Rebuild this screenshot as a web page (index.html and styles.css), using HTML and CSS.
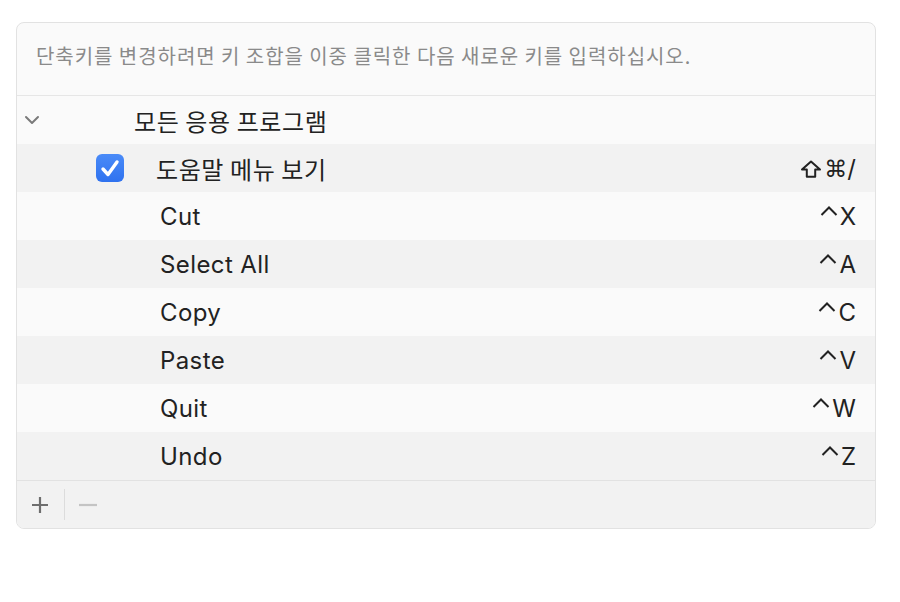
FILE: index.html
```html
<!doctype html>
<html>
  <head>
    <meta charset="utf-8">
    <link rel="stylesheet" href="styles.css">
  </head>
  <body>
    <div class="panel">
      <div class="hint">단축키를 변경하려면 키 조합을 이중 클릭한 다음 새로운 키를 입력하십시오.</div>
      <div class="rows">
        <div class="row group">
          <span class="chevron">
            <svg width="16" height="10" viewBox="0 0 16 10"><path d="M2 2 L8 8 L14 2" fill="none" stroke="#7a7a7a" stroke-width="2" stroke-linecap="round" stroke-linejoin="round"/></svg>
          </span>
          <span class="label">모든 응용 프로그램</span>
        </div>
        <div class="row item checked">
          <span class="check">
            <svg width="22" height="20" viewBox="0 0 22 20"><path d="M4 11 L9 16.5 L18 4" fill="none" stroke="#fff" stroke-width="3.4" stroke-linecap="round" stroke-linejoin="round"/></svg>
          </span>
          <span class="label">도움말 메뉴 보기</span>
          <span class="keys"><svg class="shift" width="22" height="18" viewBox="0 0 22 18"><path d="M11 1.5 L20 9.5 H15.2 V16.8 H6.8 V9.5 H2 Z" fill="none" stroke="#222" stroke-width="2" stroke-linejoin="round"/></svg><span class="cmdkey">⌘</span>/</span>
        </div>
        <div class="row cmd"><span class="label">Cut</span><span class="keys"><svg class="ctrl" width="18" height="10" viewBox="0 0 18 10"><path d="M1.5 9 L9 1.5 L16.5 9" fill="none" stroke="#222" stroke-width="2"/></svg>X</span></div>
        <div class="row cmd"><span class="label">Select All</span><span class="keys"><svg class="ctrl" width="18" height="10" viewBox="0 0 18 10"><path d="M1.5 9 L9 1.5 L16.5 9" fill="none" stroke="#222" stroke-width="2"/></svg>A</span></div>
        <div class="row cmd"><span class="label">Copy</span><span class="keys"><svg class="ctrl" width="18" height="10" viewBox="0 0 18 10"><path d="M1.5 9 L9 1.5 L16.5 9" fill="none" stroke="#222" stroke-width="2"/></svg>C</span></div>
        <div class="row cmd"><span class="label">Paste</span><span class="keys"><svg class="ctrl" width="18" height="10" viewBox="0 0 18 10"><path d="M1.5 9 L9 1.5 L16.5 9" fill="none" stroke="#222" stroke-width="2"/></svg>V</span></div>
        <div class="row cmd"><span class="label">Quit</span><span class="keys"><svg class="ctrl" width="18" height="10" viewBox="0 0 18 10"><path d="M1.5 9 L9 1.5 L16.5 9" fill="none" stroke="#222" stroke-width="2"/></svg>W</span></div>
        <div class="row cmd"><span class="label">Undo</span><span class="keys"><svg class="ctrl" width="18" height="10" viewBox="0 0 18 10"><path d="M1.5 9 L9 1.5 L16.5 9" fill="none" stroke="#222" stroke-width="2"/></svg>Z</span></div>
      </div>
      <div class="footer">
        <span class="btn add">
          <svg width="18" height="18" viewBox="0 0 18 18"><path d="M9 1 V17 M1 9 H17" stroke="#6e6e6e" stroke-width="2.2"/></svg>
        </span>
        <span class="divider"></span>
        <span class="btn remove">
          <svg width="18" height="18" viewBox="0 0 18 18"><path d="M0 9 H18" stroke="#c4c4c4" stroke-width="2.2"/></svg>
        </span>
      </div>
    </div>
  </body>
</html>
```

FILE: styles.css
```css
body {
  margin: 0;
  padding: 22px 24px 0 16px;
  background: #fff;
  font-family: Inter, "Noto Sans CJK KR", sans-serif;
  color: #222;
}
.panel {
  width: 858px;
  border: 1px solid #e2e2e2;
  border-radius: 8px;
  background: #fafafa;
  overflow: hidden;
}
.hint {
  height: 73px;
  box-sizing: border-box;
  padding: 18px 0 0 19px;
  font-family: "Noto Sans CJK KR", sans-serif;
  font-size: 20px;
  letter-spacing: 0.95px;
  color: #8a8a8a;
  border-bottom: 1px solid #e6e6e6;
}
.row {
  height: 48px;
  display: flex;
  align-items: center;
  font-size: 24px;
  letter-spacing: 0.4px;
}
.row:nth-child(even) {
  background: #f2f2f2;
}
.label {
  flex: 1;
}
.keys {
  padding-right: 19px;
  font-size: 24px;
  letter-spacing: 0;
}
.ctrl {
  vertical-align: 9px;
  margin-right: 2px;
}
.shift {
  vertical-align: -1px;
  margin-right: 2px;
}
.cmdkey {
  font-family: "DejaVu Sans", sans-serif;
  font-size: 23px;
}
.group .label,
.item .label {
  font-family: "Noto Sans CJK KR", sans-serif;
  font-size: 24px;
  letter-spacing: 0.6px;
}
.chevron {
  display: flex;
  width: 110px;
  padding-left: 7px;
}
.check {
  width: 28px;
  height: 28px;
  margin: 0 32px 0 79px;
  border-radius: 6px;
  background: linear-gradient(#4a8bf8, #2f72ef);
  display: flex;
  align-items: center;
  justify-content: center;
}
.cmd .label {
  padding-left: 143px;
}
.footer {
  height: 47px;
  border-top: 1px solid #e2e2e2;
  background: #f2f2f2;
  display: flex;
  align-items: center;
}
.btn {
  display: flex;
}
.add {
  margin-left: 14px;
}
.divider {
  width: 1px;
  height: 31px;
  background: #dcdcdc;
  margin: 0 14px 0 15px;
}
```
